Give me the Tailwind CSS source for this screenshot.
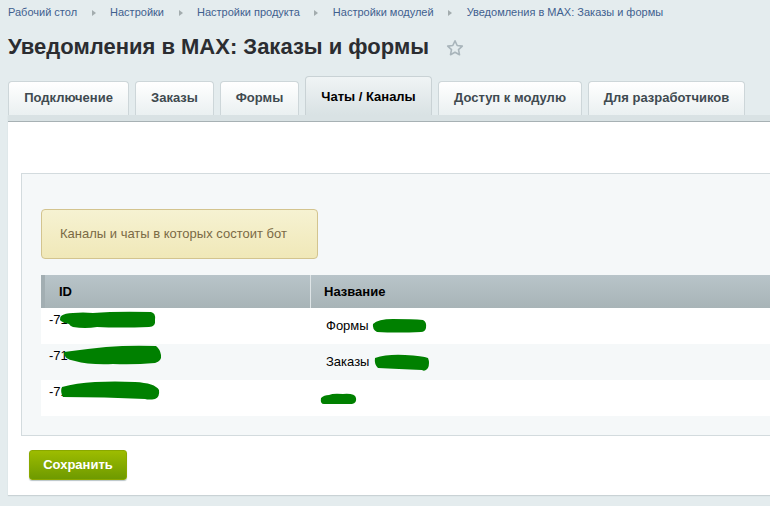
<!DOCTYPE html>
<html lang="ru">

<head>
  <meta charset="UTF-8" />
  <title>Уведомления в MAX: Заказы и формы</title>
  <script src="https://cdn.jsdelivr.net/npm/@tailwindcss/browser@4"></script>
</head>

<body class="bg-[#e4ecee] h-[506px] overflow-hidden font-['Liberation_Sans',Arial,sans-serif]">
  <div class="relative h-[506px] overflow-hidden pl-2">

    <!-- breadcrumbs -->
    <div class="flex items-center h-[11px] mt-[7px] text-[11px] text-[#3f5f8e]">
      <span>Рабочий стол</span>
      <span class="mx-[14.5px] w-0 h-0 border-y-[3.5px] border-y-transparent border-l-[4px] border-l-[#a3acae]"></span>
      <span>Настройки</span>
      <span class="mx-[14.5px] w-0 h-0 border-y-[3.5px] border-y-transparent border-l-[4px] border-l-[#a3acae]"></span>
      <span>Настройки продукта</span>
      <span class="mx-[14.5px] w-0 h-0 border-y-[3.5px] border-y-transparent border-l-[4px] border-l-[#a3acae]"></span>
      <span>Настройки модулей</span>
      <span class="mx-[14.5px] w-0 h-0 border-y-[3.5px] border-y-transparent border-l-[4px] border-l-[#a3acae]"></span>
      <span>Уведомления в MAX: Заказы и формы</span>
    </div>

    <!-- title -->
    <div class="flex items-center h-[26px] mt-[16px]">
      <h1 class="text-[22px] leading-[26px] font-bold text-[#2b2d31]">Уведомления в MAX: Заказы и формы</h1>
      <svg class="ml-[17px] mt-[2px]" width="18" height="18" viewBox="0 0 18 18" fill="none">
        <path d="M9 1.8l2.2 4.7 5.1.6-3.8 3.5 1 5.1L9 13.2l-4.5 2.5 1-5.1-3.8-3.5 5.1-.6z" stroke="#a9b5bb" stroke-width="1.6" stroke-linejoin="round" />
      </svg>
    </div>

    <!-- tabs -->
    <div class="flex items-end gap-[6px] h-[39px] mt-[16px] w-[800px] text-[13px] font-bold">
      <div class="w-[121px] h-[34px] flex items-center justify-center pb-[2px] rounded-t-[4px] border border-b-0 border-[#cdd6d9] bg-gradient-to-b from-white to-[#eaf0f1] text-[#3f4a50]">Подключение</div>
      <div class="w-[79px] h-[34px] flex items-center justify-center pb-[2px] rounded-t-[4px] border border-b-0 border-[#cdd6d9] bg-gradient-to-b from-white to-[#eaf0f1] text-[#3f4a50]">Заказы</div>
      <div class="w-[79px] h-[34px] flex items-center justify-center pb-[2px] rounded-t-[4px] border border-b-0 border-[#cdd6d9] bg-gradient-to-b from-white to-[#eaf0f1] text-[#3f4a50]">Формы</div>
      <div class="w-[127px] h-[39px] flex items-center justify-center pt-[1px] rounded-t-[4px] border border-b-0 border-[#c9d2d5] bg-gradient-to-b from-[#f0f4f5] to-[#d9e2e4] text-black">Чаты / Каналы</div>
      <div class="w-[144px] h-[34px] flex items-center justify-center pb-[2px] rounded-t-[4px] border border-b-0 border-[#cdd6d9] bg-gradient-to-b from-white to-[#eaf0f1] text-[#3f4a50]">Доступ к модулю</div>
      <div class="w-[157px] h-[34px] flex items-center justify-center pb-[2px] rounded-t-[4px] border border-b-0 border-[#cdd6d9] bg-gradient-to-b from-white to-[#eaf0f1] text-[#3f4a50]">Для разработчиков</div>
    </div>

    <!-- content panel -->
    <div class="w-[800px] h-[380px] bg-white border-t-[7px] border-t-[#d9e2e4] shadow-[0_1px_1px_#c9d2d5]">
      <div class="h-[1px] -mt-[1px] mb-[1px] bg-[#a7b1b4]"></div>

      <!-- inner panel -->
      <div class="ml-[13px] mt-[51px] h-[263px] border border-[#d3dbde] bg-[#f5f8f9] pl-[19px] pt-[35px]">
        <div class="w-[277px] h-[50px] flex items-center pl-[18px] rounded-[4px] border border-[#d3c48f] bg-gradient-to-b from-[#f6f2d2] to-[#f0e8b8] text-[13px] text-[#7a6a45]">Каналы и чаты в которых состоит бот</div>

        <table class="mt-[16px] w-[800px] table-fixed border-separate border-spacing-0 text-[13px] text-black">
          <thead>
            <tr class="h-[33px] bg-gradient-to-b from-[#b8c4c9] to-[#a8b4b7] text-left font-bold">
              <th class="w-[270px] pl-[14px] border-l-[4px] border-l-[#a2aeb2] border-r border-r-[#dfe5e7] font-bold">ID</th>
              <th class="pl-[13px] font-bold">Название</th>
            </tr>
          </thead>
          <tbody>
            <tr class="h-[36px] bg-white">
              <td class="pl-[8px] pb-[12px]">-71</td>
              <td class="pl-[15px]">Формы</td>
            </tr>
            <tr class="h-[36px] bg-[#f5f8f9]">
              <td class="pl-[8px] pb-[12px]">-71</td>
              <td class="pl-[15px]">Заказы</td>
            </tr>
            <tr class="h-[36px] bg-white">
              <td class="pl-[8px] pb-[12px]">-71</td>
              <td class="pl-[15px]"></td>
            </tr>
          </tbody>
        </table>
      </div>

      <button class="block ml-[21px] mt-[14px] w-[98px] h-[30px] rounded-[3px] border border-[#8aa800] bg-gradient-to-b from-[#9dbc00] to-[#6e9a00] text-[13px] font-bold text-white shadow-[0_1px_1px_#b9c4c7]">Сохранить</button>
    </div>

    <!-- green scribbles over the ids and names -->
    <svg class="absolute left-0 top-0" width="770" height="506" viewBox="0 0 770 506" fill="#008000">
      <path d="M61 316q4-3 12-3 10-1 20 0 24-2 58-1 5 1 4 8 1 7-6 7-30 1-52 0-12 2-24 0-3-1-4-3-8-2-9-4 0-3 1-4z" />
      <path d="M64 352q22-3 42-5 24-2 50-1 4 3 5 9t-6 8q-22 2-42 1-24 1-38-3-12-2-11-9z" />
      <path d="M62 387q14-4 33-5 20-1 40 0 20 1 24 8 1 7-4 9-6 1-10 0-40-2-82-2-3-5-1-10z" />
      <path d="M373 324q5-5 20-5 20 0 30 1 4 2 3 8-1 4-5 4-24 1-44 0-5-3-4-8z" />
      <path d="M375 358q12-4 30-3 18 1 23 3 2 5 0 10-3 4-6 2-24-1-44-2-4-4-3-10z" />
      <path d="M321 398q3-3 8-3 4-2 14-1 12-1 13 4 1 5-4 6-14 0-28 0-4 0-3-6z" />
    </svg>
  </div>
</body>

</html>
